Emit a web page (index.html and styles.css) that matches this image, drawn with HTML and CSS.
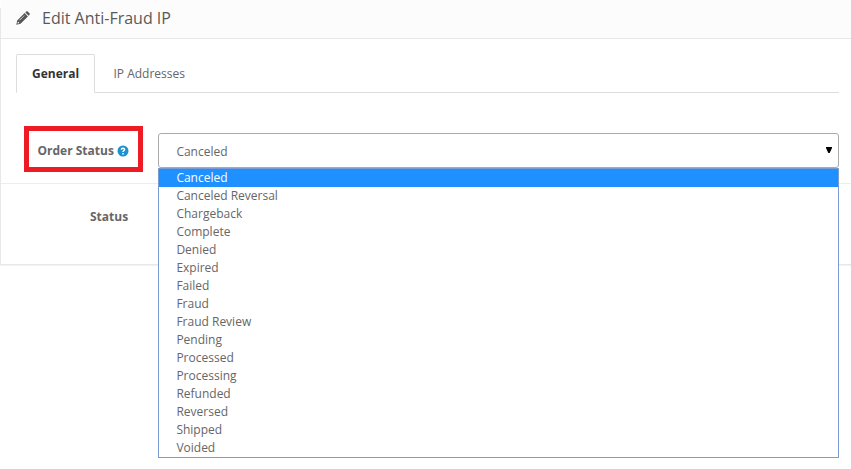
FILE: index.html
```html
<!DOCTYPE html>
<html lang="en">
<head>
<meta charset="utf-8">
<title>Edit Anti-Fraud IP</title>
<link rel="stylesheet" href="styles.css">
</head>
<body>
<main class="panel">
  <header class="panel-heading">
    <svg class="pencil" viewBox="0 0 14 14" aria-hidden="true"><path fill-rule="evenodd" d="M.3 13.7 1.2 9.5 8.6 2.1l3.3 3.3-7.4 7.4zM1.7 11.2l-.3 1.4 1.4-.3.5-.6-1-1zM3.4 9.1l.3.3 4.9-4.9-.3-.3z"/><path d="m9.3 1.4.9-.9q.7-.7 1.5 0l1.8 1.8q.7.8 0 1.5l-.9.9z"/></svg>
    <h1>Edit Anti-Fraud IP</h1>
  </header>
  <nav class="tabs">
    <a class="tab active">General</a>
    <a class="tab">IP Addresses</a>
  </nav>
  <form>
    <div class="row row-order">
      <div class="label-frame">
        <span class="label">Order Status</span>
        <svg class="help" viewBox="0 0 12 12" aria-hidden="true"><circle cx="6" cy="6" r="5.5" fill="#1e91cf"/><path d="M4.3 4.6C4.4 2.9 7.6 2.9 7.6 4.6 7.6 5.7 6 5.7 6 7M6 8v1.4" fill="none" stroke="#fff" stroke-width="1.5"/></svg>
      </div>
      <div class="select">
        <span>Canceled</span>
        <svg class="arrow" viewBox="0 0 6 6" aria-hidden="true"><path d="M0 0h6v1L3.7 6H2.3L0 1z"/></svg>
        <ul class="options">
          <li class="selected">Canceled</li>
          <li>Canceled Reversal</li>
          <li>Chargeback</li>
          <li>Complete</li>
          <li>Denied</li>
          <li>Expired</li>
          <li>Failed</li>
          <li>Fraud</li>
          <li>Fraud Review</li>
          <li>Pending</li>
          <li>Processed</li>
          <li>Processing</li>
          <li>Refunded</li>
          <li>Reversed</li>
          <li>Shipped</li>
          <li>Voided</li>
        </ul>
      </div>
    </div>
    <div class="row row-status">
      <span class="label">Status</span>
    </div>
  </form>
</main>
</body>
</html>
```
FILE: styles.css
```css
* { box-sizing: border-box; }

body {
  margin: 0;
  height: 469px;
  overflow: hidden;
  background: #fff;
  color: #666;
  font: 12px/18px "Open Sans", sans-serif;
}

.panel {
  height: 266px;
  background: linear-gradient(#e8e8e8, #e8e8e8) 0 8px / 1px 100% no-repeat;
  padding-left: 1px;
  border-bottom: 1px solid #f1f1f1;
  box-shadow: inset 0 -1px #e8e8e8;
}

.panel-heading {
  display: flex;
  align-items: center;
  gap: 12px;
  height: 39px;
  padding: 0 15px 3px;
  background: #fcfcfc;
  border-bottom: 1px solid #e8e8e8;
}

.pencil { width: 14px; height: 14px; fill: #555; }

h1 {
  margin: 0;
  color: #595959;
  font-size: 16px;
  font-weight: 400;
  line-height: 20px;
}

.tabs {
  display: flex;
  height: 39px;
  margin: 15px 12px 0 15px;
  border-bottom: 1px solid #ddd;
}

.tab {
  height: 39px;
  padding: 11px 18.5px;
  color: #666;
}

.tab.active {
  width: 79px;
  padding: 10px 15px;
  background: #fff;
  border: 1px solid #ddd;
  border-bottom-color: #fff;
  border-radius: 2px 2px 0 0;
  color: #333;
  font-weight: 700;
}

.label { font-weight: 700; }

.row { display: flex; }

.row-order {
  height: 91px;
  padding: 33px 0 0 23px;
  border-bottom: 1px solid #ededed;
}

.label-frame {
  display: flex;
  align-items: center;
  gap: 3.5px;
  width: 119px;
  height: 46px;
  padding: 3px 0 0 8.5px;
  border: 5px solid #ed1c24;
}

.help { width: 12px; height: 12px; }

.select {
  position: relative;
  display: flex;
  align-items: center;
  justify-content: space-between;
  width: 681px;
  height: 35px;
  margin: 7px 0 0 15px;
  padding: 2px 6px 0 17.4px;
  background: #fff;
  border: 1px solid #aaa;
  border-radius: 3px;
}

.arrow { width: 6px; height: 6px; margin-bottom: 4px; fill: #000; }

.options {
  position: absolute;
  top: 34px;
  left: -1px;
  width: 681px;
  margin: 0;
  padding: 0;
  background: #fff;
  border: 1px solid #7a9cd3;
  list-style: none;
}

.options li { height: 18px; padding-left: 17.4px; }

.options .selected { background: #1e90ff; color: #fff; }

.row-status { padding: 24px 0 0 89px; }
```
